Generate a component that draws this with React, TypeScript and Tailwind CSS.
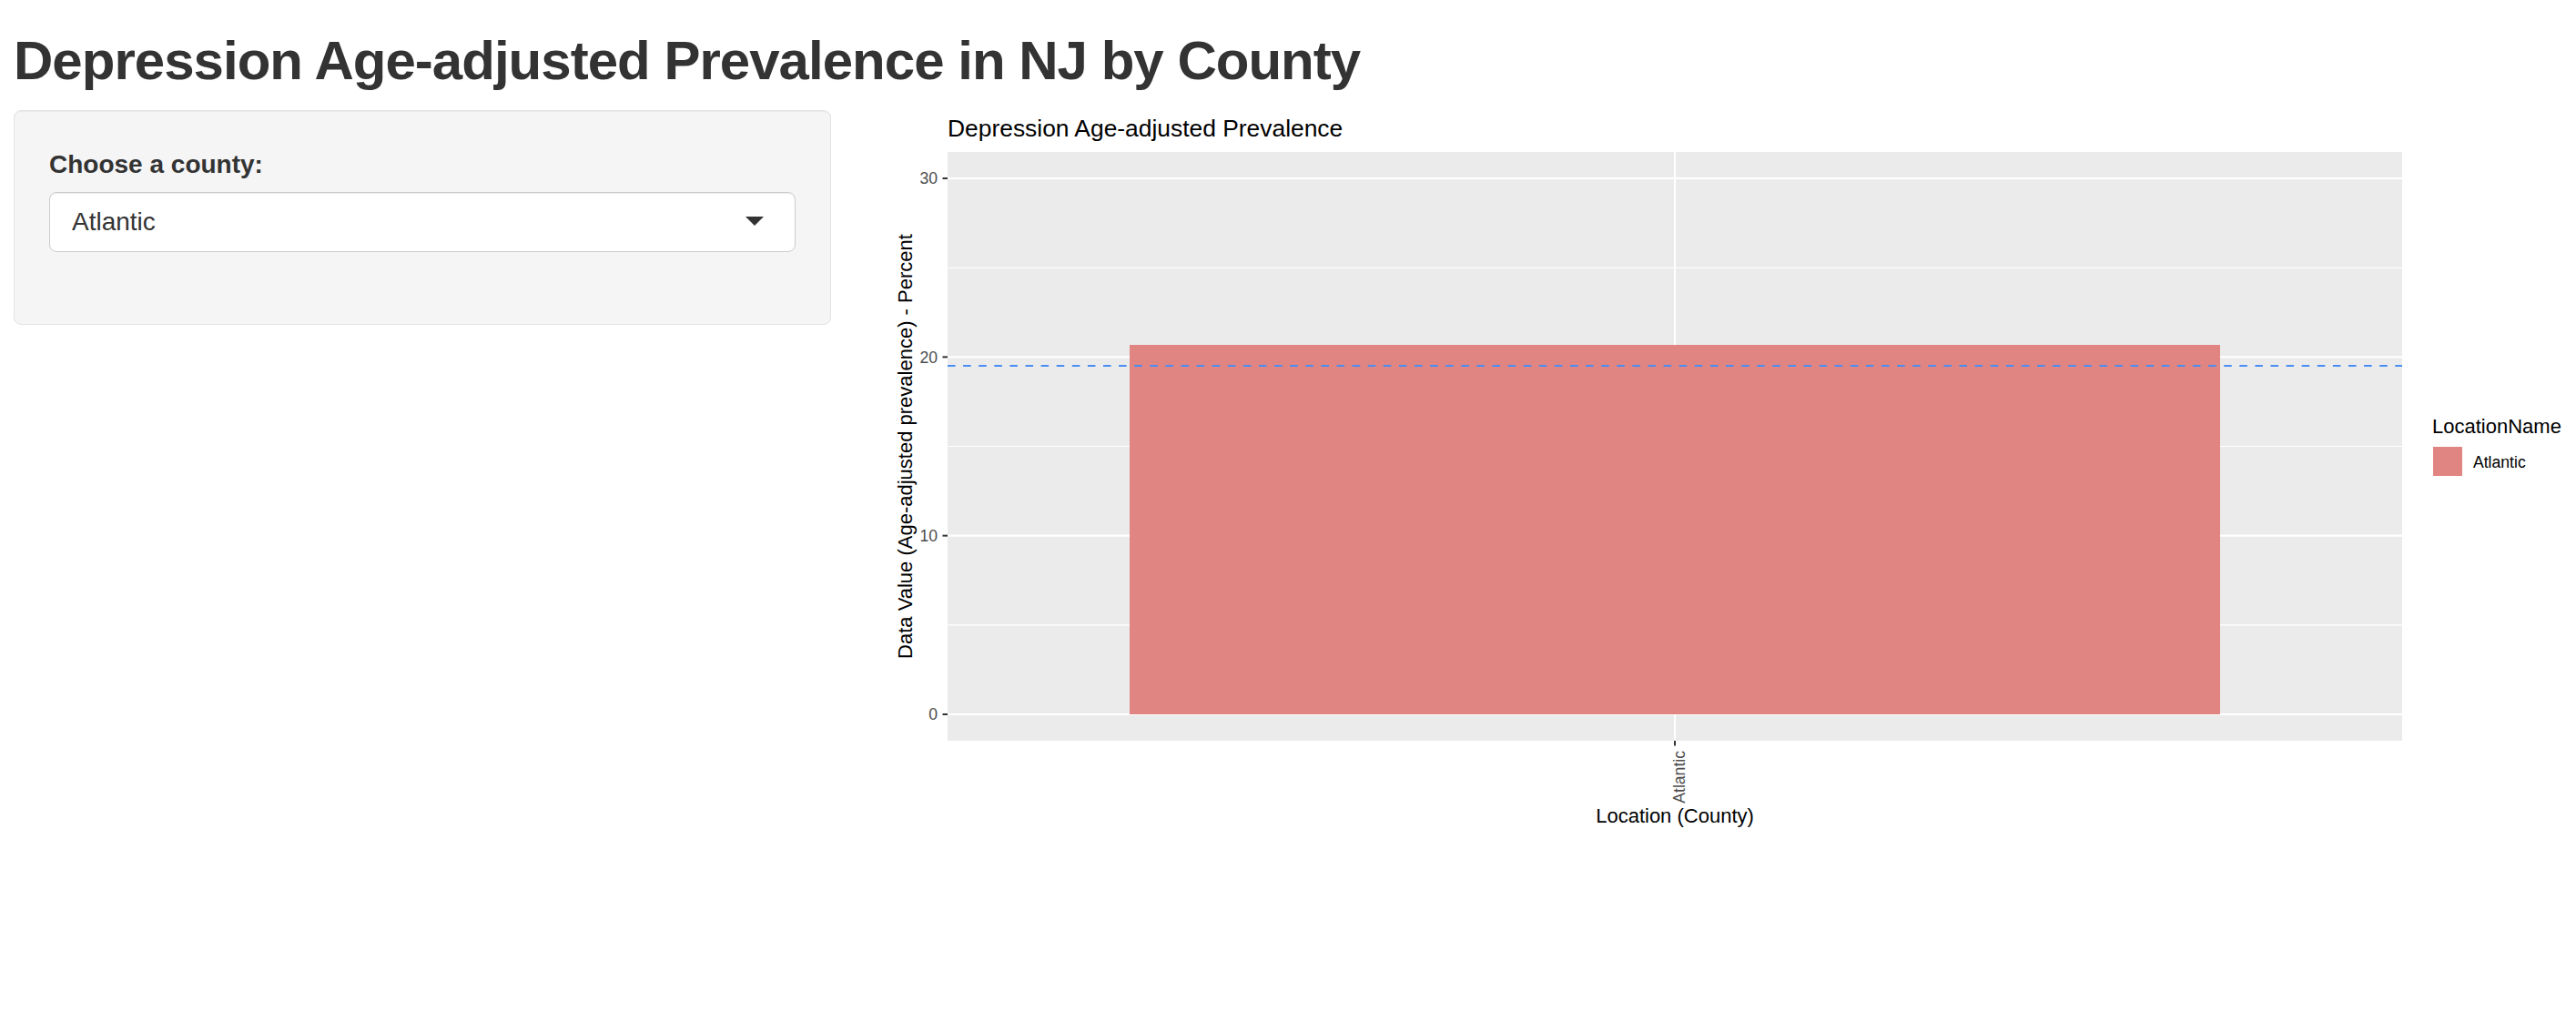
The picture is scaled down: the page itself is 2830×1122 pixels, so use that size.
const Y0 = 785;
const PX = 19.633;
const yv = (v: number) => Y0 - v * PX;

const PANEL = { x: 1041, y: 167, w: 1598, h: 647 };
const BAR = '#e08581';

function Chart() {
  const majors = [0, 10, 20, 30];
  const minors = [5, 15, 25];
  const x2 = PANEL.x + PANEL.w;

  return (
    <svg width={1857} height={800} viewBox="958 121 1857 800" className="block shrink-0">
      <text x={1041} y={150} fontSize={26.4} fill="#000">
        Depression Age-adjusted Prevalence
      </text>

      <rect x={PANEL.x} y={PANEL.y} width={PANEL.w} height={PANEL.h} fill="#ebebeb" />
      {minors.map((v) => (
        <line key={v} x1={PANEL.x} x2={x2} y1={yv(v)} y2={yv(v)} stroke="#fff" strokeWidth={1.1} />
      ))}
      {majors.map((v) => (
        <line key={v} x1={PANEL.x} x2={x2} y1={yv(v)} y2={yv(v)} stroke="#fff" strokeWidth={2.1} />
      ))}
      <line x1={1840} x2={1840} y1={PANEL.y} y2={PANEL.y + PANEL.h} stroke="#fff" strokeWidth={2.1} />

      <rect x={1241} y={yv(20.68)} width={1198} height={Y0 - yv(20.68)} fill={BAR} />
      <line x1={PANEL.x} x2={x2} y1={402} y2={402} stroke="#4a8ef5" strokeWidth={2} strokeDasharray="8.55 8.55" />

      {/* y axis */}
      {majors.map((v) => (
        <g key={v}>
          <line x1={1035.5} x2={1041} y1={yv(v)} y2={yv(v)} stroke="#333" strokeWidth={2} />
          <text x={1030} y={yv(v) + 6.3} fontSize={17.6} fill="#4d4d4d" textAnchor="end">
            {v}
          </text>
        </g>
      ))}
      <text transform="translate(1002 490.5) rotate(-90)" fontSize={22} fill="#000" textAnchor="middle">
        Data Value (Age-adjusted prevalence) - Percent
      </text>

      {/* x axis */}
      <line x1={1840} x2={1840} y1={814} y2={819.5} stroke="#333" strokeWidth={2} />
      <text transform="translate(1850.5 825) rotate(-90)" fontSize={17.6} fill="#4d4d4d" textAnchor="end">
        Atlantic
      </text>
      <text x={1840} y={904} fontSize={22} fill="#000" textAnchor="middle">
        Location (County)
      </text>

      {/* legend */}
      <text x={2672} y={476} fontSize={22} fill="#000">
        LocationName
      </text>
      <rect x={2673} y={491} width={32} height={32} fill={BAR} />
      <text x={2717} y={514} fontSize={17.6} fill="#000">
        Atlantic
      </text>
    </svg>
  );
}

export default function App() {
  return (
    <div className="min-h-screen bg-white px-[15px] pt-[34px] font-['Liberation_Sans',Arial,sans-serif] text-[#333]">
      <h2 className="mb-[21px] text-[60px] font-bold leading-[66px] tracking-[-0.98px]">
        Depression Age-adjusted Prevalence in NJ by County
      </h2>

      <div className="flex items-start gap-[45px]">
        <div className="w-[898px] shrink-0 rounded-[8px] border border-[#e3e3e3] bg-[#f5f5f5] px-[38px] pt-[39px] pb-[79px] shadow-[inset_0_1px_1px_rgba(0,0,0,0.05)]">
          <label className="mb-[10px] block text-[28px] font-bold leading-[40px]">Choose a county:</label>
          <div className="flex h-[66px] items-center justify-between rounded-[8px] border border-[#cccccc] bg-white pl-[24px] pr-[34px] text-[28px] leading-[40px] shadow-[inset_0_1px_1px_rgba(0,0,0,0.075)]">
            <span>Atlantic</span>
            <span className="-mt-[2px] h-0 w-0 border-x-[10px] border-t-[10px] border-x-transparent border-t-[#333]" />
          </div>
        </div>

        <Chart />
      </div>
    </div>
  );
}
